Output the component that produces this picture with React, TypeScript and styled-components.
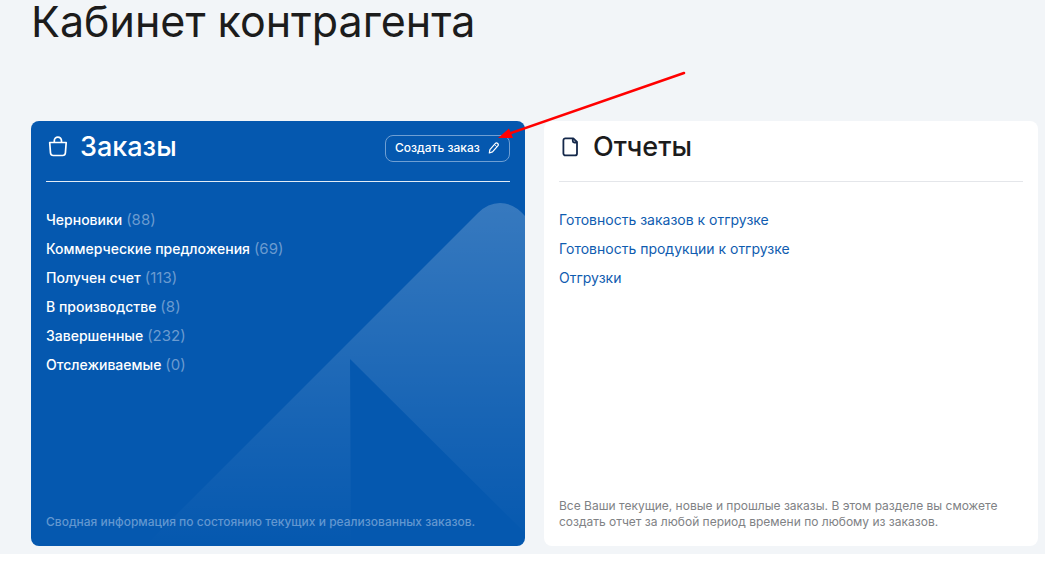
import React from "react";
import styled, { createGlobalStyle, css } from "styled-components";

const GlobalStyle = createGlobalStyle`
  * { box-sizing: border-box; }
  body {
    margin: 0;
    background: #ffffff;
    color: #1c1c1c;
    font-family: Inter, "Open Sans", sans-serif;
  }
`;

const Page = styled.main`
  padding: 0 7px 8px 31px;
  background: #f2f5f8;
`;

const PageTitle = styled.h1`
  margin: 0;
  padding-bottom: 79px;
  font-size: 43px;
  line-height: 42px;
  font-weight: 400;
`;

const Cards = styled.div`
  display: grid;
  grid-template-columns: 1fr 1fr;
  gap: 19px;
`;

const Card = styled.section<{ $primary?: boolean }>`
  position: relative;
  display: flex;
  flex-direction: column;
  min-height: 425px;
  padding: 0 15px 16px;
  border-radius: 8px;
  background: ${(p) => (p.$primary ? "#0558af" : "#ffffff")};
  color: ${(p) => (p.$primary ? "#ffffff" : "#1c1c1c")};
  ${(p) =>
    p.$primary &&
    css`
      z-index: 1;
    `}
`;

const CardHeader = styled.header<{ $primary?: boolean }>`
  position: relative;
  display: flex;
  align-items: center;
  height: 61px;
  padding-bottom: 8px;
  border-bottom: 1px solid ${(p) => (p.$primary ? "#e3ecf6" : "#e4e6ea")};
`;

const CardTitle = styled.h2`
  display: flex;
  align-items: center;
  gap: 10px;
  margin: 0;
  font-size: 27px;
  line-height: 32px;
  font-weight: 500;
`;

const ActionWrap = styled.div`
  position: relative;
  margin: 2px 0 0 auto;
`;

const ActionButton = styled.button`
  display: flex;
  align-items: center;
  justify-content: space-between;
  width: 125px;
  height: 27px;
  padding: 0 9px;
  border: 1px solid #6f9fd3;
  border-radius: 8px;
  background: transparent;
  color: #ffffff;
  font: 500 12px/16px Inter, "Open Sans", sans-serif;
  white-space: nowrap;
  cursor: pointer;
`;

const Arrow = styled.svg`
  position: absolute;
  top: -67px;
  left: calc(100% - 14px);
  pointer-events: none;
`;

const Decor = styled.svg`
  position: absolute;
  right: 0;
  bottom: 0;
  border-radius: 0 0 8px 0;
`;

const LinkList = styled.ul`
  position: relative;
  margin: 23px 0 0;
  padding: 0;
  list-style: none;
`;

const LinkItem = styled.li`
  font-size: 14px;
  line-height: 29px;
`;

const CardLink = styled.a<{ $primary?: boolean }>`
  color: ${(p) => (p.$primary ? "#ffffff" : "#0f5cb0")};
  font-weight: ${(p) => (p.$primary ? 500 : 400)};
  text-decoration: none;
`;

const Count = styled.span`
  font-size: 15px;
  color: #6b9bd0;
`;

const Note = styled.p<{ $primary?: boolean }>`
  position: relative;
  margin: auto 0 0;
  font-size: 12px;
  line-height: 16px;
  font-weight: ${(p) => (p.$primary ? 500 : 400)};
  color: ${(p) => (p.$primary ? "#6297d0" : "#808285")};
`;

const BagIcon = () => (
  <svg width="24" height="24" viewBox="0 0 24 24" fill="none" stroke="#fff" strokeWidth="1.700" strokeLinejoin="round" aria-hidden="true">
    <path d="M3.700 7.500h16.500l-.8 10.500q-.3 2.500-2.800 2.500H7.300q-2.500 0-2.800-2.500z" />
    <path d="M8.300 7V5.700a3.600 3.600 0 0 1 7.200 0V7" />
  </svg>
);

const FileIcon = () => (
  <svg width="24" height="24" viewBox="0 0 24 24" fill="none" stroke="#14284a" strokeWidth="1.800" strokeLinejoin="round" aria-hidden="true">
    <path d="M6.400 3.400h7.900l3.700 3.600v11.400a2 2 0 0 1-2 2H6.400a2 2 0 0 1-2-2V5.400a2 2 0 0 1 2-2z" />
    <path d="M13.800 3.400v2.600A1.500 1.500 0 0 0 15.300 7.500h2.700" />
  </svg>
);

const PencilIcon = () => (
  <svg width="12" height="12" viewBox="0 0 12 12" fill="none" stroke="#fff" strokeWidth="1.200" strokeLinejoin="round" aria-hidden="true">
    <path d="M1.300 11l.6-3.400 5.300-6a1.700 1.700 0 0 1 2.600 2.300l-5.300 6z" />
    <path d="M6.600 2.700l2.200 2" strokeWidth="0.800" />
  </svg>
);

const orders = [
  ["Черновики", 88],
  ["Коммерческие предложения", 69],
  ["Получен счет", 113],
  ["В производстве", 8],
  ["Завершенные", 232],
  ["Отслеживаемые", 0],
] as const;

const reports = [
  "Готовность заказов к отгрузке",
  "Готовность продукции к отгрузке",
  "Отгрузки",
];

export default function App() {
  return (
    <>
      <GlobalStyle />
      <Page>
        <PageTitle>Кабинет контрагента</PageTitle>
        <Cards>
          <Card $primary>
            <Decor width="380" height="343" viewBox="0 0 380 343" aria-hidden="true">
              <defs>
                <linearGradient id="peak" x1="0" y1="0" x2="0" y2="1">
                  <stop offset="0" stopColor="#fff" stopOpacity="0.2" />
                  <stop offset="1" stopColor="#fff" stopOpacity="0" />
                </linearGradient>
              </defs>
              <path
                d="M0 343L333 10Q343 0 355 0Q369 0 380 13V330L205 156L206 343z"
                fill="url(#peak)"
              />
            </Decor>
            <CardHeader $primary>
              <CardTitle>
                <BagIcon />
                Заказы
              </CardTitle>
              <ActionWrap>
                <ActionButton type="button">
                  Создать заказ
                  <PencilIcon />
                </ActionButton>
                <Arrow width="192" height="74" viewBox="0 0 192 74" aria-hidden="true">
                  <path d="M188 5L12 66" stroke="#ff0000" strokeWidth="2.500" strokeLinecap="round" />
                  <path d="M2 70L13 60.500L17 70z" fill="#ff0000" />
                </Arrow>
              </ActionWrap>
            </CardHeader>
            <LinkList>
              {orders.map(([name, count]) => (
                <LinkItem key={name}>
                  <CardLink $primary href="#">{name}</CardLink> <Count>({count})</Count>
                </LinkItem>
              ))}
            </LinkList>
            <Note $primary>Сводная информация по состоянию текущих и реализованных заказов.</Note>
          </Card>
          <Card>
            <CardHeader>
              <CardTitle>
                <FileIcon />
                Отчеты
              </CardTitle>
            </CardHeader>
            <LinkList>
              {reports.map((name) => (
                <LinkItem key={name}>
                  <CardLink href="#">{name}</CardLink>
                </LinkItem>
              ))}
            </LinkList>
            <Note>
              Все Ваши текущие, новые и прошлые заказы. В этом разделе вы сможете создать отчет за
              любой период времени по любому из заказов.
            </Note>
          </Card>
        </Cards>
      </Page>
    </>
  );
}
